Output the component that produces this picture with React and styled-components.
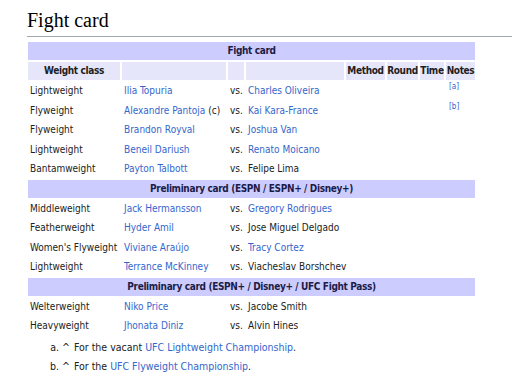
import styled, { createGlobalStyle } from 'styled-components';

const GlobalStyle = createGlobalStyle`
  html, body {
    margin: 0;
    padding: 0;
    background: #ffffff;
  }
`;

const Page = styled.div`
  padding: 8px 0 0 26px;
  font-family: "DejaVu Sans Condensed", "DejaVu Sans", sans-serif;
  font-size: 10px;
  color: #202122;
`;

const Title = styled.h2`
  margin: 0 0 3px 1px;
  padding: 0 0 4px 0;
  font-family: "Liberation Serif", serif;
  font-weight: normal;
  font-size: 20px;
  line-height: 24px;
  color: #000;
  border-bottom: 1px solid #a2a9b1;
`;

const Table = styled.table`
  border-collapse: separate;
  border-spacing: 2px;
  table-layout: fixed;
  width: 451px;
`;

const Cell = styled.td`
  padding: 2px 2px;
  line-height: 13.5px;
  white-space: nowrap;
  vertical-align: middle;
  text-align: ${(p) => p.$align || 'left'};
  overflow: visible;
`;

const Head = styled.th`
  padding: 2px 0;
  line-height: 14px;
  white-space: nowrap;
  font-weight: bold;
  letter-spacing: -0.35px;
  color: ${(p) => (p.$main ? '#1c1c48' : '#202122')};
  text-align: ${(p) => p.$align || 'center'};
  background: ${(p) => (p.$main ? '#ccccff' : '#e6e6fa')};
`;

const Link = styled.a`
  color: #3366cc;
  text-decoration: none;
`;

const NoteRef = styled.sup`
  font-size: 8px;
  line-height: 0;
  vertical-align: 5px;
  color: #3366cc;
  padding-left: 1px;
`;

const Notes = styled.ol`
  margin: 1px 0 0 0;
  padding-left: 36px;
  list-style-type: lower-alpha;
  font-size: 10.5px;
  line-height: 19px;
`;

const Caret = styled.span`
  margin-right: 4px;
`;

const cols = [92, 104, 16, 98, 39, 31, 24, 29];

const main = [
  ['Lightweight', 'Ilia Topuria', '', 'Charles Oliveira', true, 'a'],
  ['Flyweight', 'Alexandre Pantoja', ' (c)', 'Kai Kara-France', true, 'b'],
  ['Flyweight', 'Brandon Royval', '', 'Joshua Van', true],
  ['Lightweight', 'Beneil Dariush', '', 'Renato Moicano', true],
  ['Bantamweight', 'Payton Talbott', '', 'Felipe Lima', false],
];

const prelims = [
  ['Middleweight', 'Jack Hermansson', '', 'Gregory Rodrigues', true],
  ['Featherweight', 'Hyder Amil', '', 'Jose Miguel Delgado', false],
  ["Women's Flyweight", 'Viviane Araújo', '', 'Tracy Cortez', true],
  ['Lightweight', 'Terrance McKinney', '', 'Viacheslav Borshchev', false],
];

const early = [
  ['Welterweight', 'Niko Price', '', 'Jacobe Smith', false],
  ['Heavyweight', 'Jhonata Diniz', '', 'Alvin Hines', false],
];

const Bout = ({ row }) => {
  const [weight, fighter, suffix, opponent, linked, note] = row;
  return (
    <tr>
      <Cell>{weight}</Cell>
      <Cell>
        <Link href="#">{fighter}</Link>
        {suffix}
      </Cell>
      <Cell>vs.</Cell>
      <Cell>{linked ? <Link href="#">{opponent}</Link> : opponent}</Cell>
      <Cell />
      <Cell />
      <Cell />
      <Cell>{note && <NoteRef>[{note}]</NoteRef>}</Cell>
    </tr>
  );
};

const Section = ({ title }) => (
  <tr>
    <Head colSpan={8} $main>
      {title}
    </Head>
  </tr>
);

export default function App() {
  return (
    <Page>
      <GlobalStyle />
      <Title>Fight card</Title>
      <Table>
        <colgroup>
          {cols.map((w, i) => (
            <col key={i} style={{ width: w }} />
          ))}
        </colgroup>
        <thead>
          <Section title="Fight card" />
          <tr>
            <Head>Weight class</Head>
            <Head />
            <Head />
            <Head />
            <Head>Method</Head>
            <Head>Round</Head>
            <Head>Time</Head>
            <Head>Notes</Head>
          </tr>
        </thead>
        <tbody>
          {main.map((r, i) => (
            <Bout key={'m' + i} row={r} />
          ))}
          <Section title="Preliminary card (ESPN / ESPN+ / Disney+)" />
          {prelims.map((r, i) => (
            <Bout key={'p' + i} row={r} />
          ))}
          <Section title="Preliminary card (ESPN+ / Disney+ / UFC Fight Pass)" />
          {early.map((r, i) => (
            <Bout key={'e' + i} row={r} />
          ))}
        </tbody>
      </Table>
      <Notes>
        <li>
          <Caret>^</Caret>For the vacant <Link href="#">UFC Lightweight Championship</Link>.
        </li>
        <li>
          <Caret>^</Caret>For the <Link href="#">UFC Flyweight Championship</Link>.
        </li>
      </Notes>
    </Page>
  );
}
